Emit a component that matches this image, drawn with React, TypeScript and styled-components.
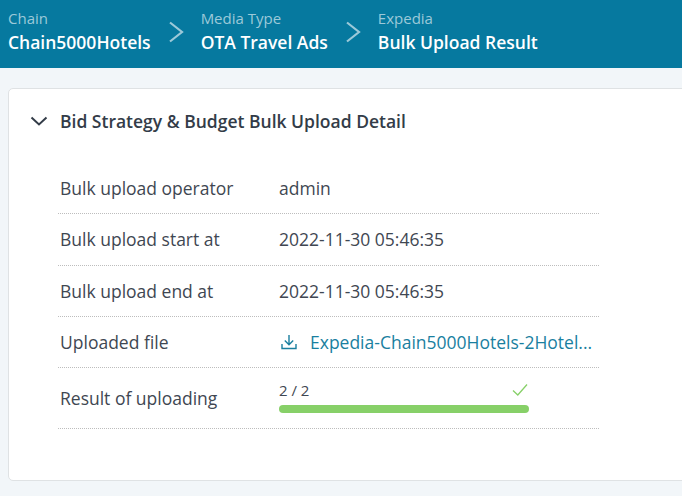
import React from "react";
import styled, { createGlobalStyle } from "styled-components";

const Global = createGlobalStyle`
  html, body { margin: 0; padding: 0; width: 682px; height: 496px; overflow: hidden; background: #f2f6f9; }
  body { font-family: "Open Sans", "Noto Sans", sans-serif; color: #333c48; }
`;

const Page = styled.div`
  width: 682px;
  height: 496px;
  overflow: hidden;
  display: flex;
  flex-direction: column;
`;

const Header = styled.header`
  height: 68px;
  flex: none;
  background: #06799f;
  display: flex;
  align-items: flex-start;
  padding: 8px 0 0 8px;
  box-sizing: border-box;
`;

const Crumb = styled.div`
  display: flex;
  flex-direction: column;
`;

const CrumbLabel = styled.span`
  font-size: 15px;
  line-height: 20px;
  color: #9cc9d9;
`;

const CrumbValue = styled.span`
  font-size: 17.5px;
  line-height: 24px;
  margin-top: 2px;
  font-weight: 600;
  color: #fff;
  white-space: nowrap;
`;

const Sep = styled.svg`
  width: 16px;
  height: 24px;
  margin: 11px 17px 0 17px;
  flex: none;
`;

const Card = styled.section`
  margin: 20px 0 0 8px;
  width: 700px;
  height: 393px;
  flex: none;
  box-sizing: border-box;
  background: #fff;
  border: 1px solid #dfe2e4;
  border-radius: 5px;
  padding: 20px 0 0 20px;
`;

const CardTitle = styled.div`
  display: flex;
  align-items: center;
  gap: 11px;
  height: 24px;
  font-size: 17.5px;
  font-weight: 600;
  color: #333c48;
`;

const Rows = styled.div`
  margin: 30px 0 0 29px;
  width: 541px;
`;

const Row = styled.div<{ $h?: number; $pb?: number }>`
  display: flex;
  align-items: center;
  height: ${(p) => p.$h ?? 50}px;
  padding-bottom: ${(p) => p.$pb ?? 0}px;
  box-sizing: content-box;
  border-bottom: 1px dotted #bdbdbd;
`;

const Label = styled.div`
  width: 221px;
  padding-left: 2px;
  box-sizing: border-box;
  flex: none;
  font-size: 17.5px;
  color: #3f4752;
`;

const Value = styled.div`
  font-size: 17.5px;
  color: #3f4752;
  white-space: nowrap;
`;

const FileLink = styled.a`
  display: flex;
  align-items: center;
  gap: 12px;
  width: 320px;
  font-size: 17.5px;
  color: #1a7f9f;
  white-space: nowrap;
`;

const Progress = styled.div`
  width: 250px;
  display: flex;
  flex-direction: column;
  margin-top: -3px;
`;

const ProgressTop = styled.div`
  display: flex;
  align-items: center;
  justify-content: space-between;
  height: 20px;
  font-size: 15px;
  color: #3f4752;
  padding-right: 1px;
`;

const Track = styled.div`
  height: 8px;
  margin-top: 5px;
  border-radius: 4px;
  background: #87d068;
`;

const Chevron = () => (
  <Sep viewBox="0 0 16 24" fill="none" stroke="#9cc9d9" strokeWidth="2.2">
    <path d="M2 3.5 L14 13 L2 22.5" />
  </Sep>
);

export default function App() {
  return (
    <Page>
      <Global />
      <Header>
        <Crumb>
          <CrumbLabel>Chain</CrumbLabel>
          <CrumbValue>Chain5000Hotels</CrumbValue>
        </Crumb>
        <Chevron />
        <Crumb>
          <CrumbLabel>Media Type</CrumbLabel>
          <CrumbValue>OTA Travel Ads</CrumbValue>
        </Crumb>
        <Chevron />
        <Crumb>
          <CrumbLabel>Expedia</CrumbLabel>
          <CrumbValue>Bulk Upload Result</CrumbValue>
        </Crumb>
      </Header>
      <Card>
        <CardTitle>
          <svg width="20" height="20" viewBox="0 0 20 20" fill="none" stroke="#333c48" strokeWidth="2">
            <path d="M2.5 6.5 L10 13.5 L17.5 6.5" />
          </svg>
          Bid Strategy &amp; Budget Bulk Upload Detail
        </CardTitle>
        <Rows>
          <Row>
            <Label>Bulk upload operator</Label>
            <Value>admin</Value>
          </Row>
          <Row $h={49} $pb={2}>
            <Label>Bulk upload start at</Label>
            <Value>2022-11-30 05:46:35</Value>
          </Row>
          <Row>
            <Label>Bulk upload end at</Label>
            <Value>2022-11-30 05:46:35</Value>
          </Row>
          <Row>
            <Label>Uploaded file</Label>
            <FileLink>
              <svg width="18" height="18" viewBox="0 0 18 18" fill="none" stroke="#1a7f9f" strokeWidth="1.4" style={{ flex: "none", marginLeft: 1 }}>
                <path d="M9 2 V11.5 M4.8 7.6 L9 11.8 L13.2 7.6 M2 11 V15.5 H16 V11" />
              </svg>
              Expedia-Chain5000Hotels-2Hotel...
            </FileLink>
          </Row>
          <Row $h={60}>
            <Label>Result of uploading</Label>
            <Progress>
              <ProgressTop>
                2 / 2
                <svg width="16" height="14" viewBox="0 0 16 14" fill="none" stroke="#87d068" strokeWidth="1.3">
                  <path d="M1 7.5 L5.8 12 L15 1.5" />
                </svg>
              </ProgressTop>
              <Track />
            </Progress>
          </Row>
        </Rows>
      </Card>
    </Page>
  );
}
